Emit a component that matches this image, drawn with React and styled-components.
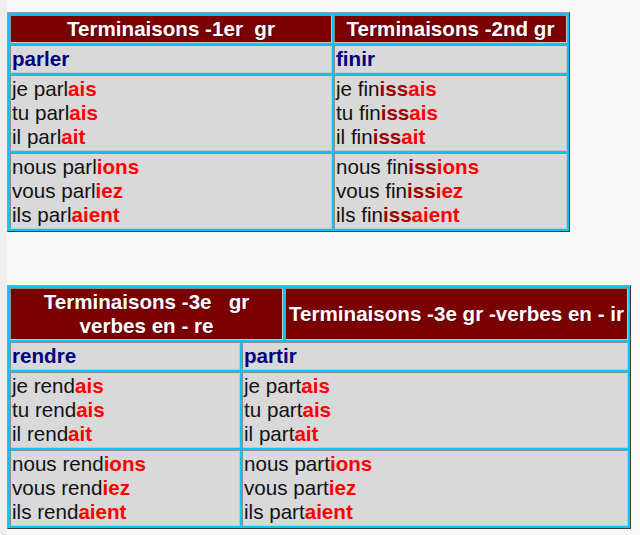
import React from 'react';
import styled, { createGlobalStyle } from 'styled-components';

const GlobalStyle = createGlobalStyle`
  body {
    margin: 0;
    background: #f8f8f8;
    font-family: 'Liberation Sans', Arial, sans-serif;
  }
`;

const Page = styled.div`
  min-height: 535px;
  box-sizing: border-box;
  border-left: 7px solid #eeeeee;
  padding-top: 12px;
  display: flex;
  flex-direction: column;
  gap: 53px;
`;

const Table = styled.table`
  table-layout: fixed;
  width: ${({ $width }) => $width}px;
  box-sizing: border-box;
  border-collapse: separate;
  border-spacing: 2px;
  background: #00c8f6;
  border: 1px solid;
  border-color: #9a9a9a #3a3a3a #3a3a3a #9a9a9a;
  font-size: 20.6px;
  line-height: 24px;
`;

const Cell = styled.td`
  box-sizing: border-box;
  padding: 1px;
  border: 1px solid;
  border-color: #8c8c8c #c6c6c6 #c6c6c6 #8c8c8c;
  vertical-align: top;
  text-align: left;
  background: #d9d9d9;
  color: #111;
`;

const HeadCell = styled(Cell).attrs({ as: 'th' })`
  background: #7b0000;
  color: #ffffff;
  font-weight: bold;
  text-align: center;
  vertical-align: middle;
  white-space: nowrap;
  text-shadow: 1px 1px 0 rgba(60, 0, 30, 0.6);
`;

const VerbCell = styled(Cell)`
  color: #000080;
  font-weight: bold;
`;

const Line = styled.div`
  white-space: nowrap;
`;

const Mid = styled.b`
  color: #a00000;
`;

const Ending = styled.b`
  color: #ff0000;
`;

const persons1 = ['je', 'tu', 'il'];
const persons2 = ['nous', 'vous', 'ils'];
const ends1 = ['ais', 'ais', 'ait'];
const ends2 = ['ions', 'iez', 'aient'];

const Forms = ({ persons, stem, mid, ends }) =>
  persons.map((p, i) => (
    <Line key={p}>
      {p} {stem}
      {mid && <Mid>{mid}</Mid>}
      <Ending>{ends[i]}</Ending>
    </Line>
  ));

const App = () => (
  <>
    <GlobalStyle />
    <Page>
      <Table $width={563}>
        <colgroup>
          <col style={{ width: 322 }} />
          <col style={{ width: 233 }} />
        </colgroup>
        <tbody>
          <tr>
            <HeadCell>Terminaisons -1er&nbsp; gr</HeadCell>
            <HeadCell>Terminaisons -2nd gr</HeadCell>
          </tr>
          <tr>
            <VerbCell>parler</VerbCell>
            <VerbCell>finir</VerbCell>
          </tr>
          <tr>
            <Cell>
              <Forms persons={persons1} stem="parl" ends={ends1} />
            </Cell>
            <Cell>
              <Forms persons={persons1} stem="fin" mid="iss" ends={ends1} />
            </Cell>
          </tr>
          <tr>
            <Cell>
              <Forms persons={persons2} stem="parl" ends={ends2} />
            </Cell>
            <Cell>
              <Forms persons={persons2} stem="fin" mid="iss" ends={ends2} />
            </Cell>
          </tr>
        </tbody>
      </Table>

      <Table $width={624}>
        <colgroup>
          <col style={{ width: 230 }} />
          <col style={{ width: 41 }} />
          <col style={{ width: 343 }} />
        </colgroup>
        <tbody>
          <tr>
            <HeadCell colSpan={2}>
              Terminaisons -3e &nbsp; gr
              <br />
              verbes en - re
            </HeadCell>
            <HeadCell>Terminaisons -3e gr -verbes en - ir</HeadCell>
          </tr>
          <tr>
            <VerbCell>rendre</VerbCell>
            <VerbCell colSpan={2}>partir</VerbCell>
          </tr>
          <tr>
            <Cell>
              <Forms persons={persons1} stem="rend" ends={ends1} />
            </Cell>
            <Cell colSpan={2}>
              <Forms persons={persons1} stem="part" ends={ends1} />
            </Cell>
          </tr>
          <tr>
            <Cell>
              <Forms persons={persons2} stem="rend" ends={ends2} />
            </Cell>
            <Cell colSpan={2}>
              <Forms persons={persons2} stem="part" ends={ends2} />
            </Cell>
          </tr>
        </tbody>
      </Table>
    </Page>
  </>
);

export default App;
